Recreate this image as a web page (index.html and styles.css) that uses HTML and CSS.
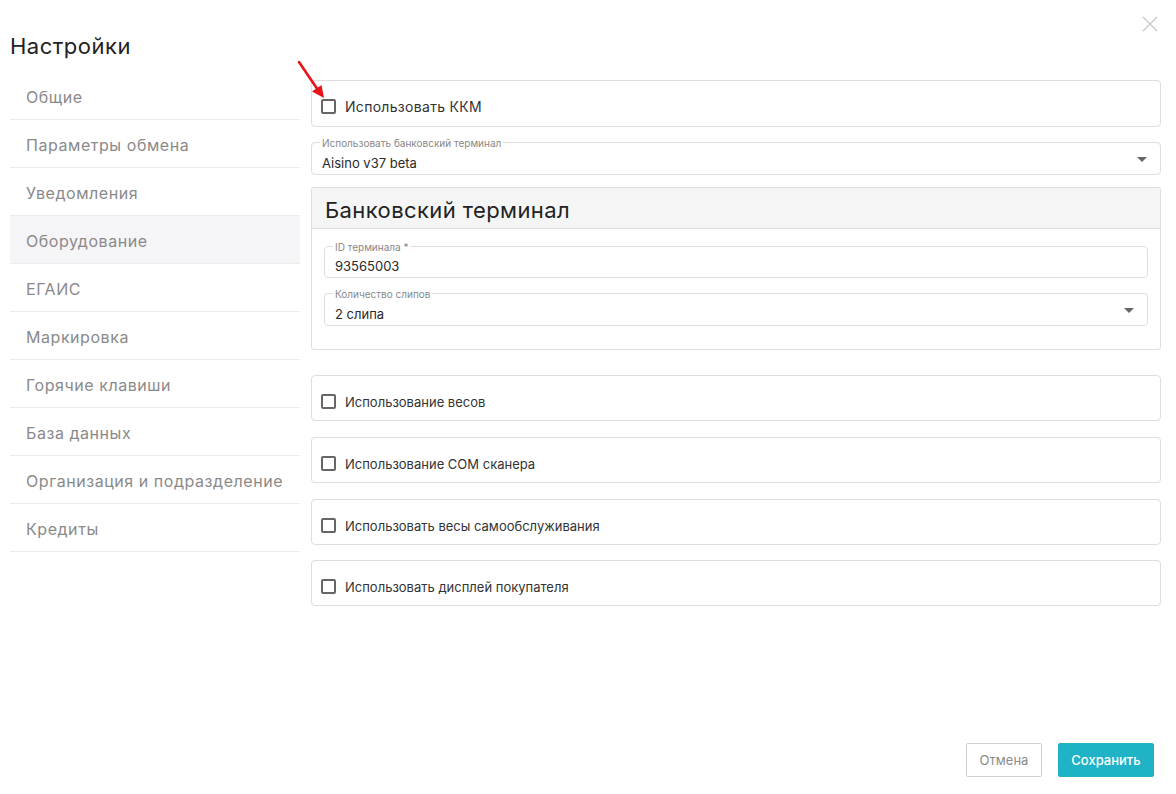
FILE: index.html
```html
<!DOCTYPE html>
<html lang="ru">
<head>
<meta charset="utf-8">
<title>Настройки</title>
<link rel="stylesheet" href="styles.css">
</head>
<body>
<div class="dialog">
  <header class="header">
    <h1 class="title">Настройки</h1>
    <button class="close" aria-label="Закрыть">
      <svg width="16" height="16" viewBox="0 0 16 16"><path d="M1 1 L15 15 M15 1 L1 15" stroke="#c8c8c8" stroke-width="1.3" fill="none"/></svg>
    </button>
  </header>
  <div class="layout">
    <nav class="sidebar">
      <div class="nav-item">Общие</div>
      <div class="nav-item">Параметры обмена</div>
      <div class="nav-item">Уведомления</div>
      <div class="nav-item active">Оборудование</div>
      <div class="nav-item">ЕГАИС</div>
      <div class="nav-item">Маркировка</div>
      <div class="nav-item">Горячие клавиши</div>
      <div class="nav-item">База данных</div>
      <div class="nav-item">Организация и подразделение</div>
      <div class="nav-item">Кредиты</div>
    </nav>
    <main class="main">
      <div class="check-card first">
        <span class="checkbox"></span>
        <span class="check-label">Использовать ККМ</span>
        <svg class="pointer" width="40" height="46" viewBox="0 0 40 46"><path d="M3 3 L22 31" stroke="#e8141a" stroke-width="2.6" stroke-linecap="round" fill="none"/><path d="M28 39 L16 32.5 L25.5 26 Z" fill="#e8141a"/></svg>
      </div>

      <div class="field select top-select">
        <span class="legend">Использовать банковский терминал</span>
        <span class="value">Aisino v37 beta</span>
        <span class="caret"></span>
      </div>

      <section class="panel">
        <div class="panel-head">Банковский терминал</div>
        <div class="panel-body">
          <div class="field input">
            <span class="legend">ID терминала *</span>
            <span class="value">93565003</span>
          </div>
          <div class="field select slips">
            <span class="legend">Количество слипов</span>
            <span class="value">2 слипа</span>
            <span class="caret"></span>
          </div>
        </div>
      </section>

      <div class="check-card scales">
        <span class="checkbox"></span>
        <span class="check-label small">Использование весов</span>
      </div>
      <div class="check-card">
        <span class="checkbox"></span>
        <span class="check-label small">Использование COM сканера</span>
      </div>
      <div class="check-card">
        <span class="checkbox"></span>
        <span class="check-label small">Использовать весы самообслуживания</span>
      </div>
      <div class="check-card last">
        <span class="checkbox"></span>
        <span class="check-label small">Использовать дисплей покупателя</span>
      </div>
    </main>
  </div>
  <footer class="footer">
    <button class="btn btn-cancel">Отмена</button>
    <button class="btn btn-save">Сохранить</button>
  </footer>
</div>
</body>
</html>
```

FILE: styles.css
```css
* { box-sizing: border-box; }
html, body { margin: 0; padding: 0; background: #fff; }
body {
  font-family: Inter, "Noto Sans", "Liberation Sans", sans-serif;
  color: #333;
}
.dialog {
  height: 794px;
  display: flex;
  flex-direction: column;
}
.header {
  display: flex;
  justify-content: space-between;
  align-items: flex-start;
  padding: 16px 18px 0 10px;
}
.title {
  margin: 17px 0 0 0;
  font-size: 22px;
  line-height: 26px;
  font-weight: 400;
  letter-spacing: 0.5px;
  color: #222;
}
.close {
  border: 0;
  background: none;
  padding: 0;
  width: 16px;
  height: 16px;
  display: block;
  cursor: pointer;
}
.close svg { display: block; }

.layout {
  display: flex;
  gap: 11px;
  padding: 0 15px 0 10px;
  margin-top: 13px;
}
.sidebar {
  width: 290px;
  flex: none;
}
.nav-item {
  padding: 15px 16px 12px;
  font-size: 16px;
  line-height: 20px;
  letter-spacing: 0.55px;
  color: #8a8a8a;
  border-bottom: 1px solid #ececec;
}
.nav-item.active { background: #f5f5f7; }

.main {
  flex: 1;
  margin-top: 8px;
  display: flex;
  flex-direction: column;
}

.check-card {
  position: relative;
  border: 1px solid #dedede;
  border-radius: 4px;
  padding: 16px 9px 8px;
  display: flex;
  align-items: center;
  gap: 9px;
  margin-top: 16px;
}
.check-card.first { margin-top: 0; padding-bottom: 9px; }
.check-card.scales { margin-top: 25px; }
.check-card.last { margin-top: 15px; }
.checkbox {
  width: 15px;
  height: 15px;
  border: 2px solid #666;
  border-radius: 2px;
  flex: none;
  margin-bottom: 2px;
}
.check-label {
  font-size: 14px;
  line-height: 20px;
  letter-spacing: 0.3px;
  color: #333;
}
.check-label.small {
  font-size: 13px;
  letter-spacing: 0;
}
.pointer {
  position: absolute;
  left: -16px;
  top: -22px;
}

.field {
  position: relative;
  border: 1px solid #dedede;
  border-radius: 4px;
  height: 33px;
  padding: 4px 13px 2px 10px;
  display: flex;
  align-items: flex-end;
}
.field.input { height: 32px; }
.top-select { margin-top: 15px; }
.slips { margin-top: 15px; }
.legend {
  position: absolute;
  left: 8px;
  top: -6px;
  padding: 0 2px;
  background: #fff;
  font-size: 10px;
  line-height: 12px;
  color: #888;
  white-space: nowrap;
}
.value {
  flex: 1;
  font-size: 13px;
  line-height: 18px;
  color: #2a2a2a;
}
.caret {
  align-self: center;
  width: 0;
  height: 0;
  border-left: 5.5px solid transparent;
  border-right: 5.5px solid transparent;
  border-top: 5.5px solid #666;
}

.panel {
  margin-top: 12px;
  border: 1px solid #dedede;
  border-radius: 3px;
  overflow: hidden;
}
.panel-head {
  background: #f5f5f5;
  border-bottom: 1px solid #dedede;
  padding: 9px 13px 5px;
  font-size: 22px;
  line-height: 26px;
  letter-spacing: 0.4px;
  color: #222;
}
.panel-body {
  padding: 17px 12px 23px 12px;
  display: flex;
  flex-direction: column;
}

.footer {
  margin-top: auto;
  display: flex;
  justify-content: flex-end;
  gap: 16px;
  padding: 0 22px 17px;
}
.btn {
  font-family: Inter, "Noto Sans", "Liberation Sans", sans-serif;
  font-size: 13px;
  line-height: 18px;
  height: 34px;
  padding: 0 10px;
  border-radius: 2px;
  cursor: pointer;
}
.btn-cancel {
  background: #fff;
  border: 1px solid #cfcfcf;
  color: #8a8a8a;
  width: 76px;
}
.btn-save {
  background: #20b2c6;
  border: 1px solid #20b2c6;
  color: #fff;
  font-weight: 500;
  width: 96px;
}
```
